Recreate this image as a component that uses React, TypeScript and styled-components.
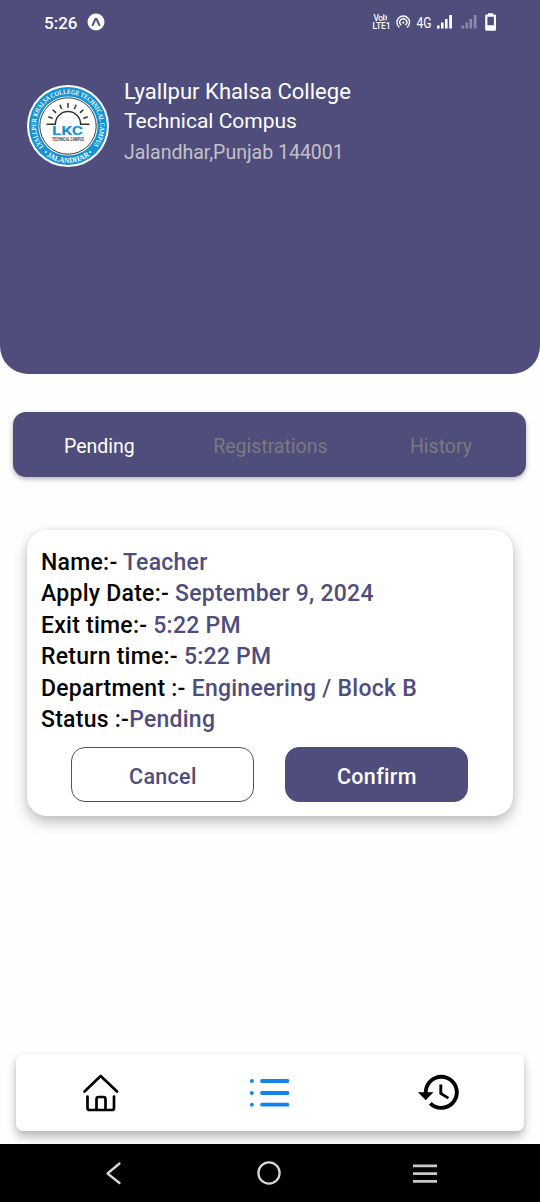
import React from "react";
import styled, { createGlobalStyle } from "styled-components";

const PURPLE = "#4f4d7c";

const GlobalStyle = createGlobalStyle`
  * { box-sizing: border-box; }
  body { margin: 0; background: #fff; font-family: Roboto, "Liberation Sans", sans-serif; }
  svg { display: block; }
`;

const Screen = styled.div`
  width: 540px;
  height: 1202px;
  display: flex;
  flex-direction: column;
  background: #fefefe;
  overflow: hidden;
`;

const Header = styled.header`
  height: 374px;
  flex: none;
  background: ${PURPLE};
  border-radius: 0 0 28px 28px;
`;

const StatusBar = styled.div`
  height: 44px;
  padding: 0 43px 0 44px;
  display: flex;
  align-items: center;
  justify-content: space-between;
  color: #fff;
`;

const StatusGroup = styled.div`
  display: flex;
  align-items: center;
  gap: 10px;
`;

const Clock = styled.span`
  font-size: 17px;
  font-weight: 500;
  line-height: 20px;
  padding-top: 1px;
`;

const School = styled.div`
  display: flex;
  padding: 33px 0 0 26px;
  gap: 14px;
`;

const LogoBox = styled.div`
  padding-top: 7px;
`;

const SchoolName = styled.h1`
  margin: 0;
  font-size: 22px;
  font-weight: 400;
  line-height: 29px;
  letter-spacing: 0.04px;
  color: #fff;
`;

const SchoolUnit = styled.p`
  margin: 0;
  padding-top: 1px;
  font-size: 21px;
  line-height: 29px;
  color: #fff;
`;

const SchoolPlace = styled.p`
  margin: 4px 0 0;
  font-size: 19.5px;
  line-height: 26px;
  color: #c3c1c8;
`;

const Tabs = styled.nav`
  flex: none;
  height: 65px;
  margin: 38px 14px 0 13px;
  padding: 0 42px 0 39px;
  display: flex;
  align-items: center;
  justify-content: space-between;
  background: ${PURPLE};
  border-radius: 13px;
  box-shadow: 0 2px 5px rgba(0, 0, 0, 0.3);
`;

const Tab = styled.button<{ $active?: boolean }>`
  border: 0;
  background: none;
  padding: 4px 12px 0;
  font: 400 19.5px/24px Roboto, sans-serif;
  color: ${(p) => (p.$active ? "#fff" : "#7b797f")};

  &:nth-child(2) {
    padding: 4px 14px 0 10px;
  }
`;

const Card = styled.section`
  flex: none;
  height: 286px;
  margin: 53px 27px 0;
  padding: 16.5px 14px 0;
  background: #fff;
  border-radius: 20px;
  box-shadow: 0 6px 14px rgba(0, 0, 0, 0.26), 0 0 5px rgba(0, 0, 0, 0.06);
`;

const Line = styled.div`
  font-size: 23px;
  font-weight: 500;
  line-height: 31.5px;
  letter-spacing: 0.25px;
  color: #050505;
  white-space: pre;
`;

const Value = styled.span`
  color: ${PURPLE};
`;

const Actions = styled.div`
  display: flex;
  gap: 31px;
  padding: 11.5px 0 0 30.4px;
`;

const Action = styled.button<{ $filled?: boolean }>`
  width: 183px;
  height: 55px;
  padding: 4px 0 0;
  border: 1.5px solid ${PURPLE};
  border-radius: 14px;
  background: ${(p) => (p.$filled ? PURPLE : "#fff")};
  color: ${(p) => (p.$filled ? "#fff" : PURPLE)};
  font: 500 21.5px/26px Roboto, sans-serif;
  letter-spacing: 0.3px;
`;

const BottomTabs = styled.nav`
  flex: none;
  height: 77px;
  margin: auto 16px 13px;
  padding: 0 61px 0 65px;
  display: flex;
  align-items: center;
  justify-content: space-between;
  background: #fff;
  border-radius: 7px;
  box-shadow: 0 6px 10px rgba(0, 0, 0, 0.27), 0 0 4px rgba(0, 0, 0, 0.06);
`;

const SystemNav = styled.footer`
  flex: none;
  height: 58px;
  padding: 0 102px 0 104px;
  display: flex;
  align-items: center;
  justify-content: space-between;
  background: #000;
`;

function AppBadge() {
  return (
    <svg width="18" height="18" viewBox="0 0 18 18">
      <circle cx="9" cy="9" r="8.5" fill="#fff" />
      <path d="M5.6 12.2 8.2 6.4Q9 5 9.8 6.4l2.6 5.8" fill="none" stroke={PURPLE} strokeWidth="2" strokeLinecap="round" />
    </svg>
  );
}

function StatusIcons() {
  return (
    <svg width="125" height="22" viewBox="372 11 125 22" fill="#fff" fontFamily="Roboto, sans-serif">
      <text x="373.5" y="20.5" fontSize="8.5" fontWeight="500" textLength="9.5">Vo</text>
      <path d="M383.800 14.500v6M385.500 15.500q2 2 0 5" stroke="#fff" strokeWidth="1.200" fill="none" />
      <text x="372.500" y="28.500" fontSize="8.500" fontWeight="500" textLength="18">LTE1</text>
      <g fill="none" stroke="#fff" strokeWidth="1.400" strokeLinecap="round">
        <path d="M399 27a6.300 6.300 0 1 1 8.500 0" />
        <path d="M400.800 24.800a3.500 3.500 0 1 1 5 0" />
      </g>
      <circle cx="403.300" cy="22.600" r="1.100" />
      <text x="416.500" y="27.500" fontSize="15" textLength="15" lengthAdjust="spacingAndGlyphs">4G</text>
      <path d="M437 25.500h2.600v3H437zM441 22.500h2.600v6H441zM445 19h2.600v9.500H445zM449.200 15h2.800v13.500h-2.800z" />
      <path opacity=".35" d="M461.500 25.500h2.600v3h-2.600zM465.500 22.500h2.600v6h-2.600zM469.500 19h2.600v9.500h-2.600zM473.700 15h2.800v13.500h-2.800z" />
      <path fillRule="evenodd" d="M488 13.200h5v1.300h2q1 0 1 1v14q0 1.300-1.300 1.300h-8.200q-1.300 0-1.300-1.300v-14q0-1 1-1h1.800zM487.400 16.800v8.400h6.500v-8.400z" />
    </svg>
  );
}

function Logo() {
  const rays = [-70, -47, -23, 0, 23, 47, 70];
  return (
    <svg width="84" height="84" viewBox="0 0 84 84">
      <defs>
        <path id="ringTop" d="M17.500 62.600A32 32 0 1 1 66.500 62.600" />
        <path id="ringBottom" d="M15.500 67.500A36.700 36.700 0 0 0 68.500 67.500" />
      </defs>
      <circle cx="42" cy="42" r="41" fill="#fff" />
      <circle cx="42" cy="42" r="39" fill="#1593d5" />
      <circle cx="42" cy="42" r="29.600" fill="#fff" />
      <circle cx="42" cy="42" r="28.200" fill="#fff" stroke="#222" strokeWidth=".9" />
      <g fill="#fff" fontFamily="Liberation Serif, serif" fontWeight="700" fontSize="6.800">
        <text><textPath href="#ringTop" textLength="143" lengthAdjust="spacingAndGlyphs">LYALLPUR KHALSA COLLEGE TECHNICAL CAMPUS</textPath></text>
        <text fontSize="7.400" textAnchor="middle"><textPath href="#ringBottom" startOffset="50%">JALANDHAR</textPath></text>
      </g>
      <circle cx="19.800" cy="68" r="1.100" fill="#fff" />
      <circle cx="64.200" cy="68" r="1.100" fill="#fff" />
      <g fill="none" stroke="#333" strokeWidth="1.500">
        <path d="M29.400 40.200a12.600 12.600 0 0 1 25.200 0" />
        <path d="M20.500 40.200h9.500M54 40.200h9.500" />
        {rays.map((a) => (
          <path key={a} d="M42 23.700v-4.700" transform={`rotate(${a} 42 40)`} />
        ))}
      </g>
      <text x="26" y="51" fill="#1593d5" fontFamily="Roboto, sans-serif" fontWeight="700" fontSize="13.500" textLength="31" lengthAdjust="spacingAndGlyphs">LKC</text>
      <text x="26" y="56.500" fill="#222" fontFamily="Roboto, sans-serif" fontWeight="500" fontSize="4.600" textLength="32" lengthAdjust="spacingAndGlyphs">TECHNICAL CAMPUS</text>
    </svg>
  );
}

function HomeIcon() {
  return (
    <svg width="40" height="42" viewBox="81 1071.500 40 42" fill="none" stroke="#000" strokeWidth="2.700" strokeLinecap="round" strokeLinejoin="round">
      <path d="M84.500 1091 100.700 1075.500 117 1091M87.500 1096v11.500q0 2 2 2h22.500q2 0 2-2V1096" />
      <path d="M96.500 1109v-10.500q0-2 2-2h5q2 0 2 2V1109" />
    </svg>
  );
}

function ListIcon() {
  return (
    <svg width="42" height="34" viewBox="248 1076 42 34" fill="none" stroke="#1184ee" strokeWidth="3.800" strokeLinecap="round">
      <path d="M262 1081h25.500M262 1093h25.500M262 1104.700h25.500M251.800 1081h.1M251.800 1093h.1M251.800 1104.700h.1" />
    </svg>
  );
}

function HistoryIcon() {
  return (
    <svg width="46.700" height="46.700" viewBox="0 0 24 24">
      <path d="M13 3a9 9 0 0 0-9 9H1l3.890 3.890.070.140L9 12H6c0-3.870 3.130-7 7-7s7 3.130 7 7-3.130 7-7 7c-1.930 0-3.680-.790-4.940-2.060l-1.420 1.420A8.954 8.954 0 0 0 13 21a9 9 0 0 0 0-18zm-1 5v5l4.280 2.540.720-1.210-3.500-2.080V8H12z" />
    </svg>
  );
}

const details = [
  ["Name:- ", "Teacher"],
  ["Apply Date:- ", "September 9, 2024"],
  ["Exit time:- ", "5:22 PM"],
  ["Return time:- ", "5:22 PM"],
  ["Department :- ", "Engineering / Block B"],
  ["Status :-", "Pending"],
];

export default function App() {
  return (
    <Screen>
      <GlobalStyle />
      <Header>
        <StatusBar>
          <StatusGroup>
            <Clock>5:26</Clock>
            <AppBadge />
          </StatusGroup>
          <StatusIcons />
        </StatusBar>
        <School>
          <LogoBox><Logo /></LogoBox>
          <div>
            <SchoolName>Lyallpur Khalsa College</SchoolName>
            <SchoolUnit>Technical Compus</SchoolUnit>
            <SchoolPlace>Jalandhar,Punjab 144001</SchoolPlace>
          </div>
        </School>
      </Header>
      <Tabs>
        <Tab $active>Pending</Tab>
        <Tab>Registrations</Tab>
        <Tab>History</Tab>
      </Tabs>
      <Card>
        {details.map(([label, value]) => (
          <Line key={label}>{label}<Value>{value}</Value></Line>
        ))}
        <Actions>
          <Action>Cancel</Action>
          <Action $filled>Confirm</Action>
        </Actions>
      </Card>
      <BottomTabs>
        <HomeIcon />
        <ListIcon />
        <HistoryIcon />
      </BottomTabs>
      <SystemNav>
        <svg width="20" height="24" viewBox="0.5 0 20 24" fill="none" stroke="#d6d6d6" strokeWidth="2.300" strokeLinecap="round" strokeLinejoin="round">
          <path d="M16 2.500 4 12.500l12 9.500" />
        </svg>
        <svg width="28" height="26" viewBox="-1.5 0 28 26" fill="none" stroke="#d6d6d6" strokeWidth="2.300">
          <circle cx="13.500" cy="13" r="10.600" />
        </svg>
        <svg width="26" height="22" viewBox="0 -0.500 26 22" fill="#c8c8c8">
          <path d="M1 2h24v2.800H1zM1 9.800h24v2.800H1zM1 17.500h24v2.800H1z" />
        </svg>
      </SystemNav>
    </Screen>
  );
}
